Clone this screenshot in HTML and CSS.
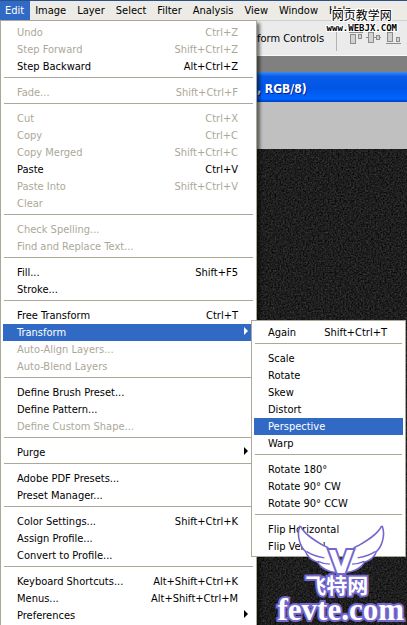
FILE: index.html
```html
<!DOCTYPE html>
<html lang="en">
<head>
	<meta charset="utf-8">
	<title>Edit - Transform</title>
	<link rel="stylesheet" href="styles.css">
</head>
<body>
	<div id="app">
		<div id="menubar">
			<button class="active">Edit</button>
			<button>Image</button>
			<button>Layer</button>
			<button>Select</button>
			<button>Filter</button>
			<button>Analysis</button>
			<button>View</button>
			<button>Window</button>
			<button>Help</button>
		</div>
		<div id="options">
			<span>Transform Controls</span>
			<div class="divider"></div>
			<svg width="54" height="16" viewBox="0 0 54 16">
				<g fill="#d2d2d2" stroke="#8c8c8c">
					<path d="M0 2.500H14"/>
					<rect x="1.500" y="4.500" width="5" height="9"/>
					<rect x="9.500" y="4.500" width="3" height="4"/>
					<path d="M17 7.500H32"/>
					<rect x="19.500" y="2.500" width="5" height="10"/>
					<rect x="27.500" y="5.500" width="3" height="4"/>
					<path d="M37 13.500H52"/>
					<rect x="38.500" y="2.500" width="5" height="9"/>
					<rect x="47.500" y="7.500" width="3" height="4"/>
				</g>
			</svg>
		</div>
		<div id="workspace">
			<div id="title">, RGB/8)</div>
			<div id="margin"></div>
			<svg id="canvas">
				<filter id="grain" x="0" y="0" width="100%" height="100%" color-interpolation-filters="sRGB">
					<feTurbulence type="fractalNoise" baseFrequency="0.6" numOctaves="2" seed="4"/>
					<feColorMatrix values="0.3 0 0 0 -0.03  0.3 0 0 0 -0.03  0.3 0 0 0 -0.03  0 0 0 0 1"/>
				</filter>
				<rect width="100%" height="100%" filter="url(#grain)"/>
			</svg>
		</div>

		<ul id="editMenu" class="menu">
			<li><button disabled>Undo <span>Ctrl+Z</span></button></li>
			<li><button disabled>Step Forward <span>Shift+Ctrl+Z</span></button></li>
			<li><button>Step Backward <span>Alt+Ctrl+Z</span></button></li>
			<li class="line"></li>
			<li><button disabled>Fade... <span>Shift+Ctrl+F</span></button></li>
			<li class="line"></li>
			<li><button disabled>Cut <span>Ctrl+X</span></button></li>
			<li><button disabled>Copy <span>Ctrl+C</span></button></li>
			<li><button disabled>Copy Merged <span>Shift+Ctrl+C</span></button></li>
			<li><button>Paste <span>Ctrl+V</span></button></li>
			<li><button disabled>Paste Into <span>Shift+Ctrl+V</span></button></li>
			<li><button disabled>Clear</button></li>
			<li class="line"></li>
			<li><button disabled>Check Spelling...</button></li>
			<li><button disabled>Find and Replace Text...</button></li>
			<li class="line"></li>
			<li><button>Fill... <span>Shift+F5</span></button></li>
			<li><button>Stroke...</button></li>
			<li class="line"></li>
			<li><button>Free Transform <span>Ctrl+T</span></button></li>
			<li>
				<button class="active more">Transform</button>
				<ul id="transformMenu" class="menu">
					<li><button>Again <span>Shift+Ctrl+T</span></button></li>
					<li class="line"></li>
					<li><button>Scale</button></li>
					<li><button>Rotate</button></li>
					<li><button>Skew</button></li>
					<li><button>Distort</button></li>
					<li><button class="active">Perspective</button></li>
					<li><button>Warp</button></li>
					<li class="line"></li>
					<li><button>Rotate 180°</button></li>
					<li><button>Rotate 90° CW</button></li>
					<li><button>Rotate 90° CCW</button></li>
					<li class="line"></li>
					<li><button>Flip Horizontal</button></li>
					<li><button>Flip Vertical</button></li>
				</ul>
			</li>
			<li><button disabled>Auto-Align Layers...</button></li>
			<li><button disabled>Auto-Blend Layers</button></li>
			<li class="line"></li>
			<li><button>Define Brush Preset...</button></li>
			<li><button>Define Pattern...</button></li>
			<li><button disabled>Define Custom Shape...</button></li>
			<li class="line"></li>
			<li><button class="more">Purge</button></li>
			<li class="line"></li>
			<li><button>Adobe PDF Presets...</button></li>
			<li><button>Preset Manager...</button></li>
			<li class="line"></li>
			<li><button>Color Settings... <span>Shift+Ctrl+K</span></button></li>
			<li><button>Assign Profile...</button></li>
			<li><button>Convert to Profile...</button></li>
			<li class="line"></li>
			<li><button>Keyboard Shortcuts... <span>Alt+Shift+Ctrl+K</span></button></li>
			<li><button>Menus... <span>Alt+Shift+Ctrl+M</span></button></li>
			<li><button class="more">Preferences</button></li>
		</ul>

		<div id="webjx">
			<div class="name">网页教学网</div>
			<div class="url">www.WEBJX.COM</div>
		</div>

		<div id="fevte">
			<svg width="90" height="56" viewBox="171 30 258 162">
				<defs>
					<g id="wing">
						<path fill="#fff" stroke="#7468cf" stroke-width="9" stroke-linejoin="round" d="M182 42C194 66 226 84 250 98C264 103 271 112 276 126L290 172C266 170 243 160 233 141C217 137 203 125 200 112C184 98 174 66 182 42Z"/>
						<path fill="none" stroke="#7468cf" stroke-width="4" d="M200 112C216 123 236 128 252 131M233 141C246 147 258 149 268 149"/>
					</g>
				</defs>
				<use href="#wing"/>
				<use href="#wing" transform="translate(600 0) scale(-1 1)"/>
				<text x="300" y="176" text-anchor="middle">V</text>
			</svg>
			<div class="name">飞特网</div>
			<div class="url">fevte.com</div>
		</div>
	</div>
</body>
</html>
```
FILE: styles.css
```css
*
{
	box-sizing: border-box;
}
body
{
	margin: 0px;
	overflow: hidden;
	font-family: "DejaVu Sans Condensed", "DejaVu Sans", Tahoma, sans-serif;
	font-size: 11px;
	color: #000000;
}
button
{
	border: none;
	margin: 0px;
	background: none;
	font: inherit;
	color: inherit;
	text-align: left;
	white-space: nowrap;
}
#app
{
	position: relative;
	display: flex;
	flex-direction: column;
	height: 100vh;
	overflow: hidden;
}
#menubar
{
	display: flex;
	height: 20px;
	border-top: 1px solid #2c4f86;
	background: #ECEBE6;
}
#menubar button
{
	padding: 0px 6px 0px 5px;
	line-height: 18px;
}
#menubar .active
{
	background: #316AC5;
	color: #FFFFFF;
}
#options
{
	display: flex;
	align-items: center;
	gap: 12px;
	height: 36px;
	padding-left: 231px;
	border-top: 1px solid #D0D0CC;
	border-bottom: 1px solid #F8F8F8;
	background: #EBEBEB;
	white-space: nowrap;
}
#options .divider
{
	width: 1px;
	height: 26px;
	background: #B4B4B0;
}
#options svg
{
	flex: none;
}
#workspace
{
	display: flex;
	flex-direction: column;
	flex: 1;
	padding-top: 16px;
	background: #808080;
}
#title
{
	height: 30px;
	padding-left: 257px;
	background: linear-gradient(#3A8DF5 0%, #0A5CE8 14%, #0055E5 55%, #0065FF 88%, #0040C8 100%);
	color: #FFFFFF;
	font-weight: bold;
	font-size: 12px;
	line-height: 34px;
	text-shadow: 1px 1px #0A1E8C;
}
#margin
{
	height: 47px;
	background: #C0C0C0;
}
#canvas
{
	display: block;
	flex: 1;
	width: 100%;
	min-height: 0px;
	background: #1E1E1E;
}

/* Menus */
.menu
{
	position: absolute;
	margin: 0px;
	padding: 3px 2px;
	border: 1px solid #ACA899;
	background: #FFFFFF;
	list-style: none;
}
.menu li
{
	position: relative;
}
.menu button
{
	display: flex;
	justify-content: space-between;
	width: 100%;
	height: 17px;
	padding: 0px 16px 0px 14px;
	line-height: 17px;
}
.menu button:disabled
{
	color: #ACA899;
}
.menu .active
{
	background: #316AC5;
	color: #FFFFFF;
}
.menu .more::after
{
	content: "";
	margin: 3px -10px 0px 0px;
	width: 0px;
	height: 0px;
	border: 4px solid transparent;
	border-left-color: currentColor;
	border-right: none;
}
.menu .line
{
	height: 1px;
	margin: 2px 1px 6px;
	background: #ACA899;
}
#editMenu
{
	top: 20px;
	left: 0px;
	width: 257px;
	box-shadow: 3px 3px 3px rgba(0, 0, 0, 0.5);
}
#transformMenu
{
	top: -4px;
	left: 248px;
	z-index: 1;
	width: 155px;
	padding-bottom: 1px;
}

/* Site marks */
#webjx
{
	position: absolute;
	top: 7px;
	right: 10px;
	text-align: center;
	text-shadow: 1px 0px #FFFFFF, -1px 0px #FFFFFF, 0px 1px #FFFFFF, 0px -1px #FFFFFF, 1px 1px #FFFFFF, -1px -1px #FFFFFF, 1px -1px #FFFFFF, -1px 1px #FFFFFF;
}
#webjx .name
{
	font-family: "Noto Sans CJK SC", sans-serif;
	font-size: 12px;
	line-height: 16px;
}
#webjx .url
{
	font-family: "DejaVu Sans Mono", monospace;
	font-weight: bold;
	font-size: 9px;
	line-height: 10px;
}
#fevte
{
	position: absolute;
	right: 3px;
	bottom: 0px;
	z-index: 2;
	display: flex;
	flex-direction: column;
	align-items: center;
	color: #FFFFFF;
	-webkit-text-stroke: 4px #7468CF;
	paint-order: stroke fill;
}
#fevte text
{
	fill: #FFFFFF;
	font-family: "DejaVu Sans", sans-serif;
	font-weight: bold;
	font-size: 90px;
	stroke: #7468CF;
	stroke-width: 12px;
	-webkit-text-stroke: 12px #7468CF;
}
#fevte .name
{
	margin: -5px 8px 0px 0px;
	font-family: "Noto Sans CJK SC", sans-serif;
	font-weight: bold;
	font-size: 21px;
	line-height: 21px;
}
#fevte .url
{
	font-family: "Liberation Serif", serif;
	font-weight: bold;
	font-size: 31px;
	line-height: 30px;
}
```
